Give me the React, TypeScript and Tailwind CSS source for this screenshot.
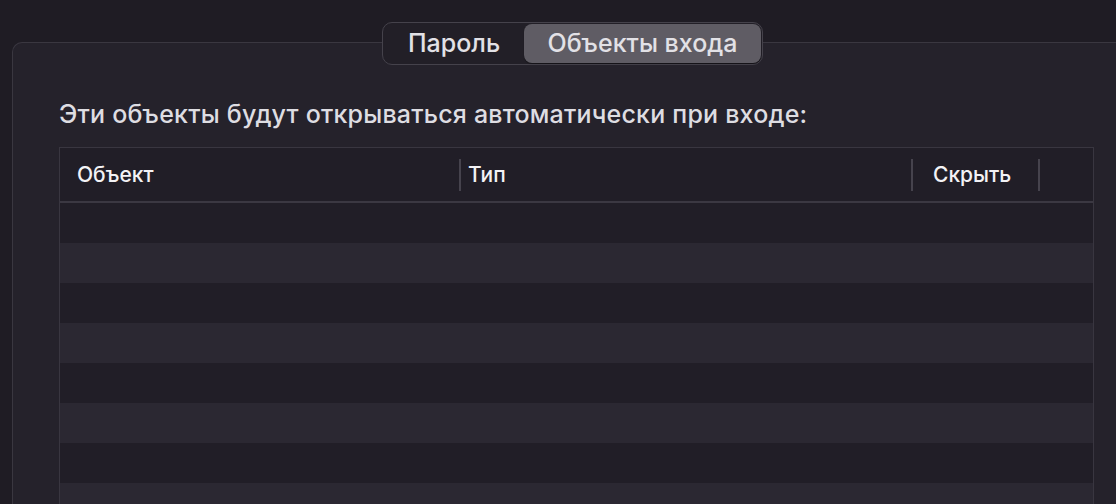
import React from "react";

export default function App() {
  const rows = Array.from({ length: 8 });
  return (
    <div
      className="w-[1116px] h-[504px] overflow-hidden bg-[#1f1c24] pt-[22px]"
      style={{ fontFamily: "Inter, 'Noto Sans', sans-serif" }}
    >
      <div className="relative z-10 flex pl-[382px]">
        <div className="flex h-[43px] w-[381px] items-center rounded-[10px] border border-[#45424b] bg-[#221f27] p-[1px] text-[25px] font-medium text-[#e2e1e6]">
          <div className="flex h-full w-[140px] items-center justify-center">Пароль</div>
          <div className="flex h-full flex-1 items-center justify-center rounded-[8px] bg-[#5f5c64] shadow-[0_1px_1px_rgba(0,0,0,0.4)]">
            Объекты входа
          </div>
        </div>
      </div>
      <div className="-mt-[23px] ml-[12px] h-[500px] rounded-tl-[10px] border-l border-t border-[#3a3740] bg-[#25222b] pl-[46px] pt-[56px]">
        <div className="text-[25px] font-medium leading-[30px] tracking-[0.2px] text-[#dedde2]">
          Эти объекты будут открываться автоматически при входе:
        </div>
        <div className="mt-[18px] w-[1035px] border border-[#393640] bg-[#211e27]">
          <div className="flex h-[55px] items-center border-b-[2px] border-[#3b3842] text-[21px] font-medium text-[#f3f2f5]">
            <div className="w-[399px] pl-[17px]">Объект</div>
            <div className="h-[32px] w-[2px] bg-[#46434d]" />
            <div className="w-[450px] pl-[7px]">Тип</div>
            <div className="h-[32px] w-[2px] bg-[#46434d]" />
            <div className="w-[125px] pl-[20px]">Скрыть</div>
            <div className="h-[32px] w-[2px] bg-[#46434d]" />
          </div>
          {rows.map((_, i) => (
            <div
              key={i}
              className={i % 2 === 0 ? "h-[40px] bg-[#211e27]" : "h-[40px] bg-[#2b2832]"}
            />
          ))}
        </div>
      </div>
    </div>
  );
}
